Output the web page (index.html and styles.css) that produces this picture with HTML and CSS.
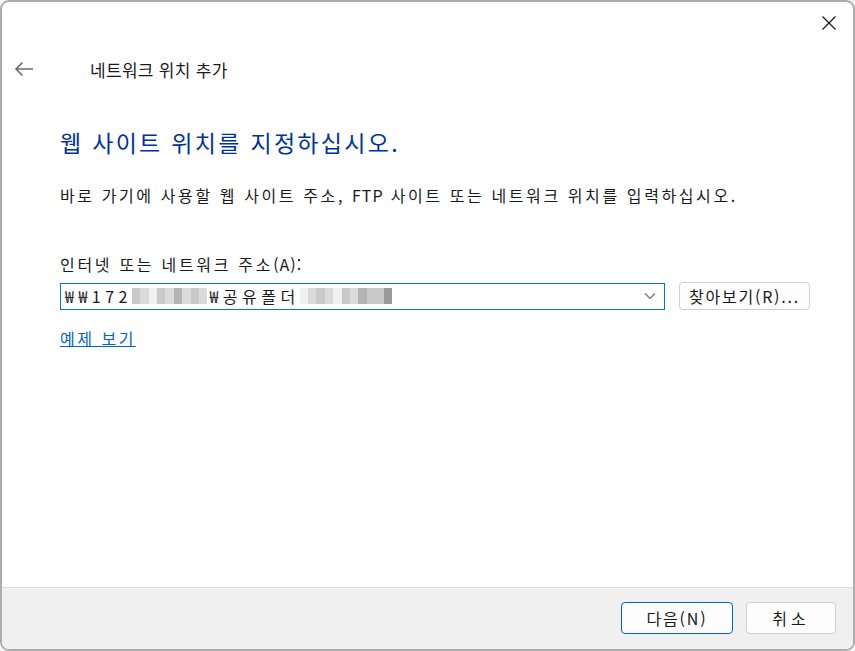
FILE: index.html
```html
<!DOCTYPE html>
<html lang="ko">
<head>
  <meta charset="UTF-8" />
  <title>네트워크 위치 추가</title>
  <link rel="stylesheet" href="styles.css">
</head>
<body>
  <div class="window">
    <div class="titlebar">
      <span class="close">
        <svg width="16" height="16" viewBox="0 0 16 16"><path d="M1.5 1.5 L14.5 14.5 M14.5 1.5 L1.5 14.5" stroke="#1a1a1a" stroke-width="1.3" fill="none"/></svg>
      </span>
    </div>
    <div class="nav">
      <span class="back">
        <svg width="20" height="16" viewBox="0 0 20 16"><path d="M19 8 H2 M8.5 1.5 L2 8 L8.5 14.5" stroke="#6b6b6b" stroke-width="1.6" fill="none"/></svg>
      </span>
      <span class="nav-title">네트워크 위치 추가</span>
    </div>
    <div class="content">
      <h1 class="heading">웹 사이트 위치를 지정하십시오.</h1>
      <p class="desc">바로 가기에 사용할 웹 사이트 주소, <span class="latin">FTP</span> 사이트 또는 네트워크 위치를 입력하십시오.</p>
      <div class="field-label">인터넷 또는 네트워크 주소<span class="latin">(A)</span>:</div>
      <div class="field-row">
        <div class="combo">
          <span class="combo-text">₩₩172<span class="blur"><i class="g2"></i><i class="g1"></i><i class="g0"></i><i class="g2"></i><i class="g1"></i><i class="g3"></i><i class="g1"></i><i class="g2"></i><i class="g1"></i></span>₩공유폴더<span class="blur"><i class="g0"></i><i class="g1"></i><i class="g2"></i><i class="g1"></i><i class="g0"></i><i class="g2"></i><i class="g1"></i><i class="g3"></i><i class="g2"></i><i class="g2"></i><i class="g4"></i></span></span>
          <svg class="chev" width="12" height="8" viewBox="0 0 12 8"><path d="M1 1.5 L6 6.5 L11 1.5" stroke="#707070" stroke-width="1.2" fill="none"/></svg>
        </div>
        <button class="btn browse">찾아보기(R)...</button>
      </div>
      <a class="link" href="#">예제 보기</a>
    </div>
    <div class="footer">
      <button class="btn primary">다음(N)</button>
      <button class="btn cancel">취소</button>
    </div>
  </div>
</body>
</html>
```

FILE: styles.css
```css
* {
  margin: 0; padding: 0; box-sizing: border-box;
}
html, body {
  width: 855px; height: 651px;
  overflow: hidden;
  background: #f3f3f3;
  font-family: 'Noto Sans CJK KR', 'Noto Sans', sans-serif;
  color: #1a1a1a;
}
.window {
  width: 855px;
  height: 651px;
  border: 2px solid #adadad;
  border-radius: 9px;
  background: #fff;
  display: flex;
  flex-direction: column;
  overflow: hidden;
}
.titlebar {
  height: 42px;
  display: flex;
  justify-content: flex-end;
  align-items: center;
  padding-right: 16px;
}
.close {
  display: flex;
  width: 16px; height: 16px;
}
.nav {
  height: 50px;
  display: flex;
  align-items: center;
  padding-left: 12px;
}
.back {
  display: flex;
  width: 20px;
}
.nav-title {
  margin-left: 56px;
  font-size: 17px;
  letter-spacing: 0.3px;
  color: #1a1a1a;
}
.content {
  flex: 1;
  padding: 33px 0 0 58px;
}
.heading {
  font-size: 23px;
  font-weight: 400;
  letter-spacing: 2.3px;
  color: #003399;
  line-height: 30px;
}
.desc {
  margin-top: 27px;
  font-size: 16px;
  letter-spacing: 2.6px;
  line-height: 22px;
}
.latin {
  letter-spacing: 1px;
}
.field-label {
  margin-top: 47px;
  font-size: 16px;
  letter-spacing: 2.7px;
  line-height: 22px;
}
.field-row {
  margin-top: 7px;
  display: flex;
  align-items: center;
  gap: 14px;
}
.combo {
  width: 605px;
  height: 27px;
  border: 1px solid #0078d4;
  display: flex;
  align-items: center;
  padding: 0 8px 0 4px;
}
.combo-text {
  flex: 1;
  font-size: 16px;
  letter-spacing: 4.5px;
  display: flex;
  align-items: center;
  white-space: nowrap;
}
.blur {
  display: inline-flex;
  height: 16px;
  margin: 0 2px 0 0;
}
.blur i {
  width: 8.4px;
  height: 16px;
}
.g0 { background: #f1f1f1; }
.g1 { background: #dadada; }
.g2 { background: #c9c9c9; }
.g3 { background: #b4b4b4; }
.g4 { background: #9a9a9a; }
.btn {
  font-family: inherit;
  font-size: 16px;
  letter-spacing: 1.8px;
  color: #1a1a1a;
  background: #fdfdfd;
  border: 1px solid #d0d0d0;
  border-radius: 4px;
}
.browse {
  width: 131px;
  height: 28px;
}
.link {
  display: inline-block;
  margin-top: 16px;
  font-size: 16px;
  letter-spacing: 2.5px;
  color: #0066cc;
  text-decoration: underline;
}
.footer {
  height: 62px;
  background: #f0f0f0;
  border-top: 1px solid #dcdcdc;
  display: flex;
  justify-content: flex-end;
  align-items: flex-start;
  gap: 13px;
  padding: 14px 17px 0 0;
}
.primary {
  width: 112px;
  height: 32px;
  border-color: #0067c0;
}
.cancel {
  width: 90px;
  height: 32px;
  letter-spacing: 4px;
}
```
